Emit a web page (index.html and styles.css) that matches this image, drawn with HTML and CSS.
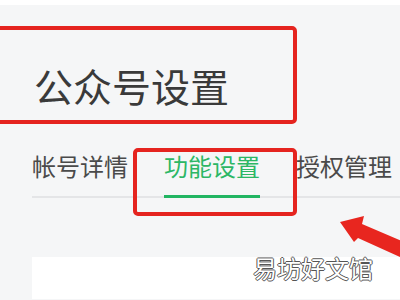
FILE: index.html
```html
<!DOCTYPE html>
<html lang="zh">
<head>
    <meta charset="UTF-8">
    <title>公众号设置</title>
    <link rel="stylesheet" href="styles.css">
</head>
<body>

<div class="topbar"></div>
<div class="main">
    <h1 class="title">公众号设置</h1>
    <div class="tabs">
        <div class="tab">帐号详情</div>
        <div class="tab active">功能设置</div>
        <div class="tab">授权管理</div>
    </div>
    <div class="card"></div>
</div>

<!-- 标注 -->
<div class="mark mark-title"></div>
<div class="mark mark-tab"></div>
<svg class="arrow" width="400" height="300" viewBox="0 0 400 300">
    <polygon points="340,222 364,216 362,224 404,242 402,258 358,238 354,242" fill="#e8261f"/>
</svg>
<div class="watermark">易坊好文馆</div>

</body>
</html>
```
FILE: styles.css
```css
* {
    box-sizing: border-box;
}
body {
    margin: 0;
    width: 400px;
    height: 300px;
    overflow: hidden;
    background-color: #f5f6f7;
    font-family: "Noto Sans CJK SC", "Noto Sans", sans-serif;
    position: relative;
}
.topbar {
    height: 5px;
    background-color: #fff;
}
.main {
    padding-left: 32px;
}
.title {
    margin: 61px 0 0 2px;
    font-size: 39px;
    line-height: 38px;
    font-weight: normal;
    color: #3a3a3a;
}
.tabs {
    display: flex;
    gap: 36px;
    margin-top: 50px;
    border-bottom: 2px solid #e4e5e7;
}
.tab {
    font-size: 24px;
    line-height: 24px;
    color: #4a4a4a;
    padding-bottom: 17px;
    margin-bottom: -2px;
    border-bottom: 3px solid transparent;
}
.tab.active {
    color: #2cb765;
    border-bottom-color: #21b562;
}
.card {
    margin-top: 59px;
    height: 42px;
    background-color: #fff;
}
.mark {
    position: absolute;
    border: 4px solid #e5241f;
    border-radius: 5px;
}
.mark-title {
    left: -10px;
    top: 26px;
    width: 307px;
    height: 98px;
}
.mark-tab {
    left: 133px;
    top: 148px;
    width: 164px;
    height: 68px;
}
.arrow {
    position: absolute;
    left: 0;
    top: 0;
}
.watermark {
    position: absolute;
    left: 253px;
    top: 253px;
    font-size: 24px;
    line-height: 30px;
    color: #fff;
    text-shadow: 1px 0 0 #555, -1px 0 0 #555, 0 1px 0 #555, 0 -1px 0 #555;
}
```
